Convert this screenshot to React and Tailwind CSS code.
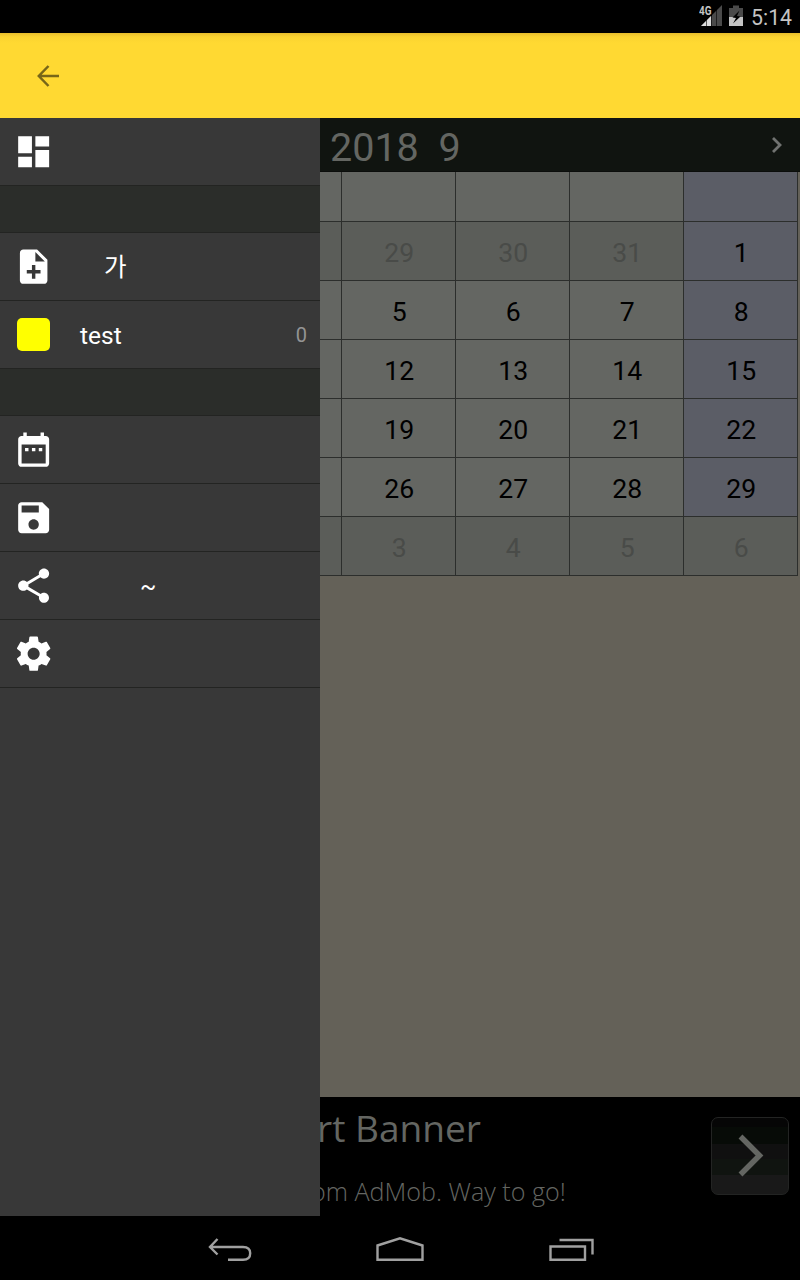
const paths = {
  dashboard: 'M3 13h8V3H3v10zm0 8h8v-6H3v6zm10 0h8V11h-8v10zm0-18v6h8V3h-8z',
  noteAdd:
    'M14 2H6c-1.1 0-1.99.9-1.99 2L4 20c0 1.1.89 2 1.99 2H18c1.1 0 2-.9 2-2V8l-6-6zm2 14h-3v3h-2v-3H8v-2h3v-3h2v3h3v2zm-3-7V3.5L18.5 9H13z',
  dateRange:
    'M9 11H7v2h2v-2zm4 0h-2v2h2v-2zm4 0h-2v2h2v-2zm2-7h-1V2h-2v2H8V2H6v2H5c-1.11 0-1.99.9-1.99 2L3 20c0 1.1.89 2 2 2h14c1.1 0 2-.9 2-2V6c0-1.1-.9-2-2-2zm0 16H5V9h14v11z',
  save:
    'M17 3H5c-1.11 0-2 .9-2 2v14c0 1.1.89 2 2 2h14c1.1 0 2-.9 2-2V7l-4-4zm-5 16c-1.66 0-3-1.34-3-3s1.34-3 3-3 3 1.34 3 3-1.34 3-3 3zm3-10H5V5h10v4z',
  share:
    'M18 16.08c-.76 0-1.44.3-1.96.77L8.91 12.7c.05-.23.09-.46.09-.7s-.04-.47-.09-.7l7.05-4.11c.54.5 1.25.81 2.04.81 1.66 0 3-1.34 3-3s-1.34-3-3-3-3 1.34-3 3c0 .24.04.47.09.7L8.04 9.81C7.5 9.31 6.79 9 6 9c-1.66 0-3 1.34-3 3s1.34 3 3 3c.79 0 1.5-.31 2.04-.81l7.12 4.16c-.05.21-.08.43-.08.65 0 1.61 1.31 2.92 2.92 2.92 1.61 0 2.92-1.31 2.92-2.92s-1.31-2.92-2.92-2.92z',
  settings:
    'M19.43 12.98c.04-.32.07-.64.07-.98s-.03-.66-.07-.98l2.11-1.65c.19-.15.24-.42.12-.64l-2-3.46c-.12-.22-.39-.3-.61-.22l-2.49 1c-.52-.4-1.08-.73-1.69-.98l-.38-2.65C14.46 2.18 14.25 2 14 2h-4c-.25 0-.46.18-.49.42l-.38 2.65c-.61.25-1.17.59-1.69.98l-2.49-1c-.23-.09-.49 0-.61.22l-2 3.46c-.13.22-.07.49.12.64l2.11 1.65c-.04.32-.07.65-.07.98s.03.66.07.98l-2.11 1.65c-.19.15-.24.42-.12.64l2 3.46c.12.22.39.3.61.22l2.49-1c.52.4 1.08.73 1.69.98l.38 2.65c.03.24.24.42.49.42h4c.25 0 .46-.18.49-.42l.38-2.65c.61-.25 1.17-.59 1.69-.98l2.49 1c.23.09.49 0 .61-.22l2-3.46c.12-.22.07-.49-.12-.64l-2.11-1.65zM12 15.5c-1.93 0-3.5-1.57-3.5-3.5s1.57-3.5 3.5-3.5 3.5 1.57 3.5 3.5-1.57 3.5-3.5 3.5z',
};

function StatusBar() {
  return (
    <div className="flex h-[33px] shrink-0 items-start bg-black pl-[699px]">
      <svg width="24" height="33" viewBox="0 0 24 33" className="shrink-0">
        <path d="M23 5V26H2z" fill="#4a4a4a" />
        <path d="M12 16V26H2z" fill="#dcdcdc" />
        <path d="M7.5 15v11M12.5 12v14M17.5 8v18" stroke="#000" strokeWidth="0.6" />
        <rect x="0" y="4" width="13" height="12" fill="#000" />
        <text x="0" y="15" fontSize="12.5" fontWeight="700" fontFamily="Roboto, sans-serif" fill="#c4c4c4" textLength="12.5" lengthAdjust="spacingAndGlyphs">4G</text>
      </svg>
      <svg width="14" height="33" viewBox="0 0 14 33" className="ml-[6px] shrink-0">
        <path d="M4 5.500h6v2.500h4v9H0V8h4z" fill="#4a4a4a" />
        <rect y="17" width="14" height="9" fill="#c4c4c4" />
        <path d="M10.500 10.500L3.500 17.500L7 18L4 23.500L11.500 16.500L8 16z" fill="#000" />
      </svg>
      <span className="ml-[8px] mt-[5px] text-[21.3px] leading-[25px] text-[#c4c4c4]">5:14</span>
    </div>
  );
}

function Row({ icon, children }) {
  return (
    <div className="flex h-[68px] items-center border-b border-[#232422] text-[24px] text-white">
      <div className="ml-[12.800px] mr-[25.900px] flex w-[41.300px] shrink-0 justify-center">
        {icon ? (
          <svg width="41.300" height="41.300" viewBox="0 0 24 24" fill="#fff">
            <path d={paths[icon]} />
          </svg>
        ) : (
          <div className="size-[33px] rounded-[5px] bg-[#ffff00]" />
        )}
      </div>
      {children}
    </div>
  );
}

function SectionGap() {
  return <div className="h-[47px] border-b border-[#232422] bg-[#2b2d2a]" />;
}

function Drawer() {
  return (
    <nav className="w-[320px] shrink-0 bg-[#383838]">
      <Row icon="dashboard" />
      <SectionGap />
      <Row icon="noteAdd">
        <span className="ml-[24px] pt-[3px] font-['Roboto','Noto_Sans_CJK_KR',sans-serif] text-[24.500px]">가</span>
      </Row>
      <Row>
        <span className="pt-[3px] text-[24.500px]">test</span>
        <span className="ml-auto mr-[13px] text-[20px] text-[#949494]">0</span>
      </Row>
      <SectionGap />
      <Row icon="dateRange" />
      <Row icon="save" />
      <Row icon="share">
        <span className="ml-[60px] pt-[2px]">~</span>
      </Row>
      <Row icon="settings" />
    </nav>
  );
}

const weeks = [
  ['', '29', '30', '31', '1'],
  ['', '5', '6', '7', '8'],
  ['', '12', '13', '14', '15'],
  ['', '19', '20', '21', '22'],
  ['', '26', '27', '28', '29'],
  ['', '3', '4', '5', '6'],
];

function cellStyle(week, column) {
  const outside = week === 5 || (week === 0 && column < 4);
  if (outside) return 'bg-[#5b5d59] text-[#494b48]';
  return column === 4 ? 'bg-[#5b5d66] text-black' : 'bg-[#646662] text-black';
}

function Calendar() {
  return (
    <div className="w-[478px]">
      <div className="grid h-[50px] grid-cols-[22px_repeat(4,114px)]">
        {[0, 1, 2, 3, 4].map((c) => (
          <div key={c} className={`border-b border-r border-[#2c2e2c] ${c === 4 ? 'bg-[#5b5d66]' : 'bg-[#646662]'}`} />
        ))}
      </div>
      {weeks.map((days, w) => (
        <div key={w} className="grid h-[59px] grid-cols-[22px_repeat(4,114px)]">
          {days.map((day, c) => (
            <div
              key={c}
              className={`flex items-center justify-center border-b border-r border-[#2c2e2c] pl-[1.500px] pt-[4px] text-[26.600px] ${cellStyle(w, c)}`}
            >
              {day}
            </div>
          ))}
        </div>
      ))}
    </div>
  );
}

function Banner() {
  return (
    <div className="flex h-[119px] overflow-hidden bg-black font-['Open_Sans',sans-serif] text-[#646662]">
      <div className="flex-1 whitespace-nowrap">
        <div className="-ml-[3px] mt-[6px] text-[37.100px] leading-[50px]">rt Banner</div>
        <div className="-ml-[9px] mt-[20px] text-[25.150px] font-light leading-[36px]">om AdMob. Way to go!</div>
      </div>
      <div className="mr-[11px] mt-[20px] flex size-[78px] items-center justify-center rounded-[7px] border border-[#232423] bg-[linear-gradient(#060606_0_12%,#070b07_12%_34%,#101010_34%_54%,#101410_54%_75%,#191919_75%)]">
        <svg width="30" height="46" viewBox="0 0 30 46" fill="none" stroke="#646662" strokeWidth="5.500">
          <path d="M5.500 3.500L24.500 22.500L5.500 41.500" />
        </svg>
      </div>
    </div>
  );
}

function NavigationBar() {
  return (
    <div className="flex h-[64px] items-start bg-black pl-[207px] pt-[20px]">
      <svg width="46" height="28" viewBox="0 0 46 28" fill="none" stroke="#a0a0a0" strokeWidth="2.400">
        <path d="M10.500 3L3 11L10.500 18.500M3 11H36C41 11 43.200 13.500 43.200 17.300S41 23.700 36 23.700H21" />
      </svg>
      <svg width="50" height="28" viewBox="0 0 50 28" fill="none" stroke="#a0a0a0" strokeWidth="2.400" className="ml-[122px]">
        <path d="M2.500 23.700V9.500L25 2.300L47.500 9.500V23.700z" />
      </svg>
      <svg width="48" height="28" viewBox="0 0 48 28" fill="none" stroke="#a0a0a0" strokeWidth="2.400" className="ml-[122px]">
        <path d="M3.500 10.500H38V23.700H3.500zM12.500 4H45.500V18.500" />
      </svg>
    </div>
  );
}

export default function App() {
  return (
    <div className="flex h-[1280px] w-[800px] flex-col overflow-hidden bg-black font-['Roboto',sans-serif]">
      <StatusBar />
      <header className="flex h-[85px] shrink-0 items-center bg-[linear-gradient(#e8bd2c,#fad330_4px,#ffd932_10px)] pl-[37px]">
        <svg width="22" height="22" viewBox="0 0 22 22" fill="none" stroke="#776618" strokeWidth="2.500">
          <path d="M11.500 1L1.800 11L11.500 21M1.800 11H22" />
        </svg>
      </header>
      <div className="flex h-[1098px]">
        <Drawer />
        <main className="flex w-[480px] flex-col bg-[#646158]">
          <div className="flex h-[54px] shrink-0 items-center justify-between border-b border-[#0b0d0b] bg-[#101410] pl-[10px] pr-[18px] text-[39.500px] text-[#646662]">
            <span className="whitespace-pre pt-[7px]">2018  9</span>
            <svg width="10" height="16" viewBox="0 0 10 16" fill="none" stroke="#707270" strokeWidth="2.800">
              <path d="M1 1L8 8L1 15" />
            </svg>
          </div>
          <Calendar />
          <div className="mt-auto">
            <Banner />
          </div>
        </main>
      </div>
      <NavigationBar />
    </div>
  );
}
